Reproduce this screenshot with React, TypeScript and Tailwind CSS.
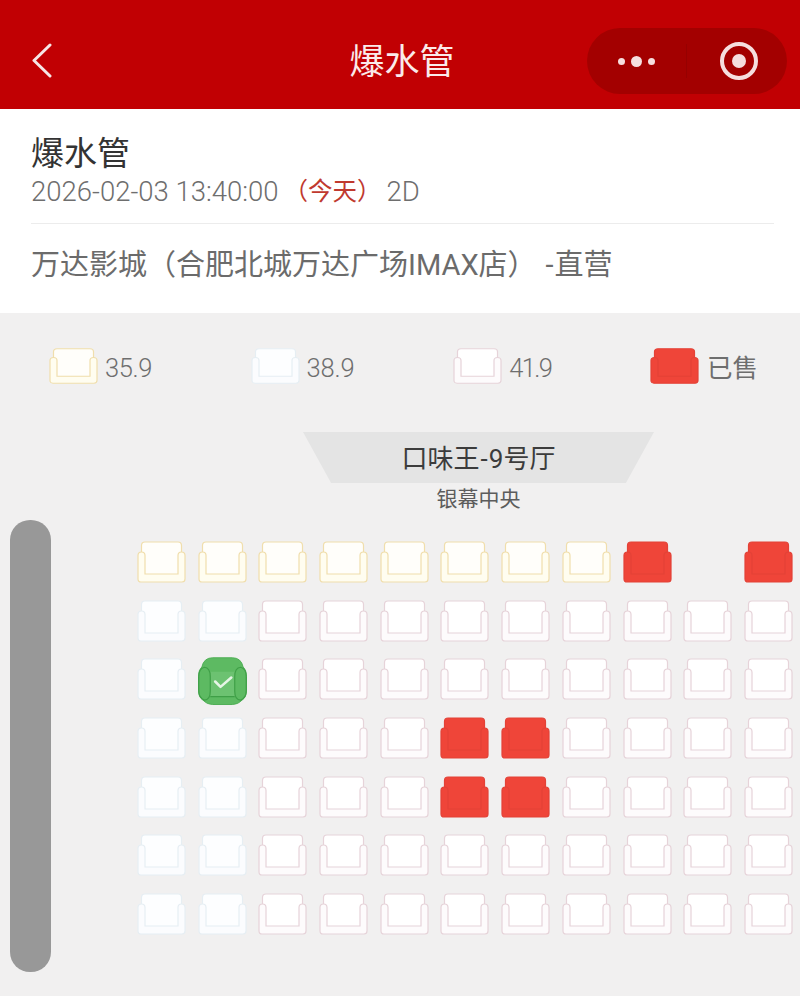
import React from 'react';

const CJK = "font-['Roboto','Noto_Sans_CJK_SC',sans-serif]";

type SeatKind = 'yellow' | 'blue' | 'pink' | 'sold' | 'picked' | 'none';

const seatColors = {
  yellow: { stroke: '#f0deac', back: '#fffefa', arm: '#fffdf0' },
  blue: { stroke: '#e6eef3', back: '#fdfeff', arm: '#fbfcfe' },
  pink: { stroke: '#e6d3d9', back: '#ffffff', arm: '#fdfbfc' },
  sold: { stroke: '#e34237', back: '#ef4539', arm: '#ef4539' },
};

const Seat = ({ kind, className = 'w-[49px] h-[42px]' }: { kind: Exclude<SeatKind, 'picked' | 'none'>; className?: string }) => {
  const c = seatColors[kind];
  return (
    <svg viewBox="0 0 49 42" preserveAspectRatio="none" className={`${className} blur-[0.4px]`} strokeWidth="1.2">
      <path d="M4.5 13V4.5Q4.5 1 8 1H41Q44.5 1 44.5 4.5V13V34H4.5Z" fill={c.back} stroke={c.stroke} />
      <path
        d="M1 38V14.5Q1 11 4.5 11Q8 11 8 14.5V33H41V14.5Q41 11 44.5 11Q48 11 48 14.5V38Q48 41 45 41H4Q1 41 1 38Z"
        fill={c.arm}
        stroke={c.stroke}
      />
    </svg>
  );
};

const PickedSeat = () => (
  <svg viewBox="0 0 50 49" className="w-[50px] h-[49px] -my-[3.5px] translate-y-[1.5px] blur-[0.3px]">
    <path
      d="M15 0.8H35Q44 0.8 46 10Q49.500 13 49.500 20V34Q49.500 41 45 44Q41 48.500 35 48.500H15Q9 48.500 5 44Q0.500 41 0.500 34V20Q0.500 13 4 10Q6 0.8 15 0.8Z"
      fill="#5dba62"
      stroke="#4fae55"
    />
    <path d="M12.500 15H37.500V40.500H12.500Z" fill="#6cc271" />
    <path d="M12.500 40.500H37.500" stroke="#3f9f47" strokeWidth="1.200" />
    <path d="M6.500 10.500Q12.500 11 12.500 20V35Q12.500 44 6.500 44Q0.800 42 0.800 34V20Q0.800 12 6.500 10.500Z" fill="#5dba62" stroke="#3f9f47" strokeWidth="1.200" />
    <path d="M43.500 10.500Q37.500 11 37.500 20V35Q37.500 44 43.500 44Q49.200 42 49.200 34V20Q49.200 12 43.500 10.500Z" fill="#5dba62" stroke="#3f9f47" strokeWidth="1.200" />
    <path d="M17.500 25L23 30.500L34 21" fill="none" stroke="#e6f5e6" strokeWidth="2.600" strokeLinecap="round" strokeLinejoin="round" />
  </svg>
);

const b: SeatKind = 'blue';
const p: SeatKind = 'pink';
const y: SeatKind = 'yellow';
const s: SeatKind = 'sold';

const seats: SeatKind[][] = [
  [y, y, y, y, y, y, y, y, s, 'none', s],
  [b, b, p, p, p, p, p, p, p, p, p],
  [b, 'picked', p, p, p, p, p, p, p, p, p],
  [b, b, p, p, p, s, s, p, p, p, p],
  [b, b, p, p, p, s, s, p, p, p, p],
  [b, b, p, p, p, p, p, p, p, p, p],
  [b, b, p, p, p, p, p, p, p, p, p],
];

const legend: { kind: Exclude<SeatKind, 'picked' | 'none'>; label: string; text: string }[] = [
  { kind: 'yellow', label: '35.9', text: 'font-light tracking-[-0.4px]' },
  { kind: 'blue', label: '38.9', text: 'font-light tracking-[-0.1px]' },
  { kind: 'pink', label: '41.9', text: 'font-light tracking-[-1.6px]' },
  { kind: 'sold', label: '已售', text: 'ml-[1px] text-[24px]' },
];

export default function App() {
  return (
    <div className={`${CJK} relative w-[800px] h-[996px] overflow-hidden bg-[#f1f0f0]`}>
      {/* Nav bar */}
      <div className="relative flex items-center justify-center h-[109px] bg-[#c10003] pt-[16px] pl-[4px]">
        <svg viewBox="0 0 20 36" className="absolute left-[32px] top-[43px] w-[20px] h-[36px]" fill="none" stroke="#f6e6e6" strokeWidth="3" strokeLinecap="round" strokeLinejoin="round">
          <path d="M18 2L2 17.500L18 33" />
        </svg>
        <span className="text-[35px] leading-none text-[#fbeaea]">爆水管</span>
        <div className="absolute left-[587px] top-[28px] flex items-center w-[200px] h-[66px] rounded-[33px] bg-[#a30000]">
          <div className="flex items-center justify-center gap-[6px] w-[99px]">
            <i className="w-[7px] h-[7px] rounded-full bg-[#f6dede]" />
            <i className="w-[11px] h-[11px] rounded-full bg-[#f6dede]" />
            <i className="w-[7px] h-[7px] rounded-full bg-[#f6dede]" />
          </div>
          <div className="w-px h-[34px] bg-[#960000]" />
          <div className="flex items-center justify-center flex-1 pl-[4px]">
            <div className="flex items-center justify-center w-[38px] h-[38px] rounded-full border-[4px] border-[#f6dede]">
              <i className="w-[14px] h-[14px] rounded-full bg-[#f6dede]" />
            </div>
          </div>
        </div>
      </div>

      {/* Film info */}
      <div className="h-[204px] bg-white px-[31px] pt-[23px]">
        <div className="text-[33px] leading-[44px] text-[#333333]">爆水管</div>
        <div className="flex items-center h-[34px] -mt-[1px] text-[24.500px] text-[#6e6e6e] whitespace-nowrap">
          <span className="text-[27.500px] font-light">2026-02-03 13:40:00</span>
          <span className="text-[#c0392f] ml-[5px]">（今天）</span>
          <span className="text-[27.500px] font-light ml-[5px]">2D</span>
        </div>
        <div className="h-px mt-[14px] mr-[-5px] bg-[#ececec]" />
        <div className="flex mt-[21px] text-[29px] leading-[40px] text-[#6b6b6b] whitespace-nowrap">
          <span>万达影城（合肥北城万达广场IMAX店）</span>
          <span className="ml-[9px] mr-[1px]">-</span>
          <span>直营</span>
        </div>
      </div>

      {/* Legend */}
      <div className="flex items-center justify-between pl-[49px] pr-[42px] pt-[35px]">
        {legend.map((item) => (
          <div key={item.label} className="flex items-center gap-[7px]">
            <Seat kind={item.kind} className="w-[49px] h-[36px]" />
            <span className={`text-[25.500px] leading-[36px] translate-y-[2px] text-[#6e6e6e] ${item.text}`}>{item.label}</span>
          </div>
        ))}
      </div>

      {/* Hall name and screen */}
      <div className="relative flex items-center justify-center w-[351px] h-[51px] mt-[48px] ml-[303px] pt-[2px] bg-[#e4e4e4] [clip-path:polygon(0_0,100%_0,92%_100%,8%_100%)]">
        <span className="text-[26px] leading-none text-[#3c3c3c] whitespace-nowrap">口味王<span className="mx-[1px]">-</span>9号厅</span>
      </div>
      <div className="w-[351px] ml-[303px] mt-[1px] text-center text-[21px] leading-[30px] text-[#5c5c5c]">银幕中央</div>

      {/* Row scroller */}
      <div className="absolute left-[10px] top-[520px] w-[41px] h-[452px] rounded-[20px] bg-[#989898]" />

      {/* Seat map */}
      <div className="grid grid-cols-[repeat(11,49px)] gap-x-[11.700px] gap-y-[16.700px] ml-[137px] mt-[27px]">
        {seats.flatMap((cols, r) =>
          cols.map((kind, c) => (
            <div key={`${r}-${c}`} className="flex items-center justify-center h-[42px]">
              {kind === 'picked' ? <PickedSeat /> : kind === 'none' ? null : <Seat kind={kind} />}
            </div>
          ))
        )}
      </div>
    </div>
  );
}
